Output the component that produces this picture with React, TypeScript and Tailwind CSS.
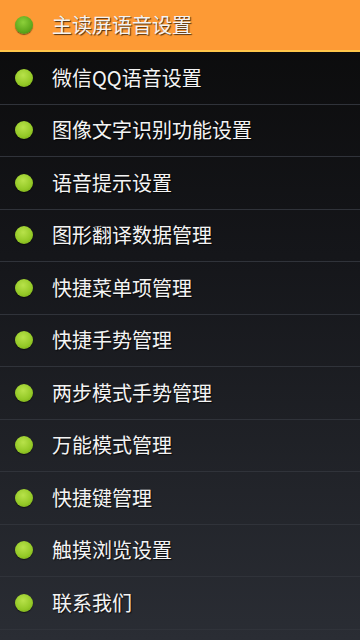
import React from "react";

const items = [
  "主读屏语音设置",
  "微信QQ语音设置",
  "图像文字识别功能设置",
  "语音提示设置",
  "图形翻译数据管理",
  "快捷菜单项管理",
  "快捷手势管理",
  "两步模式手势管理",
  "万能模式管理",
  "快捷键管理",
  "触摸浏览设置",
  "联系我们",
];

function Dot({ active }: { active: boolean }) {
  return (
    <div
      className={
        "w-[18px] h-[18px] rounded-full shrink-0 shadow-[0_1px_1px_rgba(0,0,0,0.5)] " +
        (active
          ? "bg-[radial-gradient(circle_at_45%_35%,#8cd03a_0%,#5fa81c_60%,#3f7f10_100%)]"
          : "bg-[radial-gradient(circle_at_45%_35%,#b8e24a_0%,#93c826_60%,#6a9a12_100%)]")
      }
    />
  );
}

export default function App() {
  return (
    <div className="w-[360px] h-[640px] overflow-hidden bg-[linear-gradient(to_bottom,#0a0a0a_0%,#15161a_40%,#2a2d34_100%)] font-['Noto_Sans_CJK_SC','Noto_Sans',sans-serif]">
      {items.map((t, i) => (
        <div
          key={t}
          className={
            i === 0
              ? "h-[52px] flex items-center bg-[#fd9a35] border-b-2 border-[#ffc64a]"
              : "h-[52.5px] flex items-center border-b border-[#30333a]"
          }
        >
          <div className="w-[52px] flex justify-center pr-[4px]">
            <Dot active={i === 0} />
          </div>
          <span className="text-[20px] leading-none text-[#f4f4f4] [text-shadow:1px_1px_1px_rgba(0,0,0,0.7)]">
            {t}
          </span>
        </div>
      ))}
    </div>
  );
}
